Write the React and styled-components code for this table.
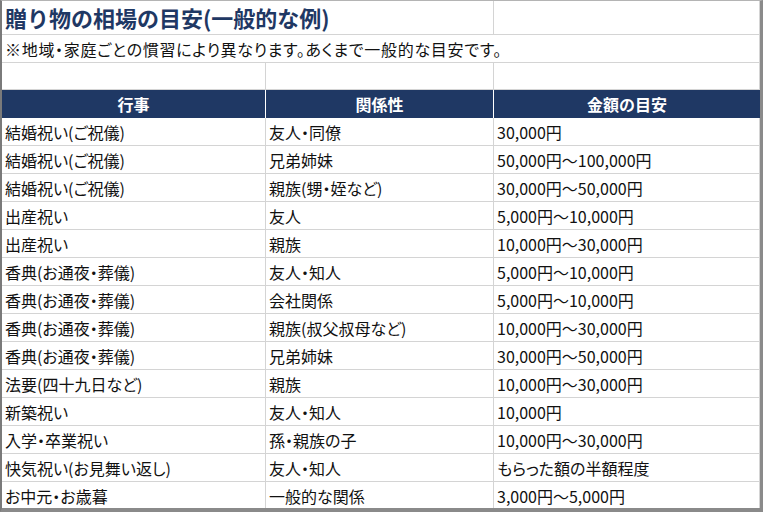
import React from "react";
import styled, { createGlobalStyle } from "styled-components";

const GlobalStyle = createGlobalStyle`
    html, body {
        margin: 0;
        padding: 0;
        background: #ffffff;
    }
    body {
        font-family: "Noto Sans CJK JP", "Noto Sans", sans-serif;
    }
`;

const gridLine = "#d4d4d4";
const navy = "#1f3864";

const Frame = styled.div`
    width: 763px;
    height: 512px;
    box-sizing: border-box;
    border-top: 1px solid #b4b4b4;
    border-left: 2px solid #7a7a7a;
    border-right: 3px solid #8a8a8a;
    border-bottom: 4px solid #8a8a8a;
    overflow: hidden;
    background: #ffffff;
`;

const Row = styled.div`
    display: grid;
    grid-template-columns: 264px 228px 266px;
    height: ${(props) => props.height}px;
    background: ${(props) => (props.header ? navy : "#ffffff")};
`;

const Cell = styled.div`
    grid-column: span ${(props) => props.span || 1};
    box-sizing: border-box;
    display: flex;
    align-items: center;
    padding: 1px 3px 0;
    border-right: 1px solid ${gridLine};
    border-bottom: 1px solid ${gridLine};
    font-size: 16px;
    color: #111111;
    white-space: nowrap;
    overflow: visible;
    font-feature-settings: "palt";
    background: #ffffff;
`;

const Note = styled(Cell)`
    letter-spacing: 0.7px;
`;

const Title = styled(Cell)`
    font-size: 22px;
    font-weight: 700;
    color: ${navy};
    font-feature-settings: normal;
    padding-top: 0;
    padding-bottom: 1px;
`;

const HeadCell = styled.div`
    box-sizing: border-box;
    display: flex;
    align-items: center;
    justify-content: center;
    border-right: 1px solid #ffffff;
    color: #ffffff;
    font-size: 16px;
    font-weight: 700;
    font-feature-settings: "palt";
    &:last-child {
        border-right: none;
    }
`;

const rows = [
    ["結婚祝い(ご祝儀)", "友人・同僚", "30,000円"],
    ["結婚祝い(ご祝儀)", "兄弟姉妹", "50,000円～100,000円"],
    ["結婚祝い(ご祝儀)", "親族(甥・姪など)", "30,000円～50,000円"],
    ["出産祝い", "友人", "5,000円～10,000円"],
    ["出産祝い", "親族", "10,000円～30,000円"],
    ["香典(お通夜・葬儀)", "友人・知人", "5,000円～10,000円"],
    ["香典(お通夜・葬儀)", "会社関係", "5,000円～10,000円"],
    ["香典(お通夜・葬儀)", "親族(叔父叔母など)", "10,000円～30,000円"],
    ["香典(お通夜・葬儀)", "兄弟姉妹", "30,000円～50,000円"],
    ["法要(四十九日など)", "親族", "10,000円～30,000円"],
    ["新築祝い", "友人・知人", "10,000円"],
    ["入学・卒業祝い", "孫・親族の子", "10,000円～30,000円"],
    ["快気祝い(お見舞い返し)", "友人・知人", "もらった額の半額程度"],
    ["お中元・お歳暮", "一般的な関係", "3,000円～5,000円"],
];

export default function App() {
    return (
        <>
            <GlobalStyle />
            <Frame>
                <Row height={34}>
                    <Title span={2}>贈り物の相場の目安(一般的な例)</Title>
                    <Cell />
                </Row>
                <Row height={28}>
                    <Note span={3}>
                        ※地域・家庭ごとの慣習により異なります。あくまで一般的な目安です。
                    </Note>
                </Row>
                <Row height={27}>
                    <Cell />
                    <Cell />
                    <Cell />
                </Row>
                <Row height={28} header>
                    <HeadCell>行事</HeadCell>
                    <HeadCell>関係性</HeadCell>
                    <HeadCell>金額の目安</HeadCell>
                </Row>
                {rows.map((r, i) => (
                    <Row height={28} key={i}>
                        <Cell>{r[0]}</Cell>
                        <Cell>{r[1]}</Cell>
                        <Cell>{r[2]}</Cell>
                    </Row>
                ))}
            </Frame>
        </>
    );
}
